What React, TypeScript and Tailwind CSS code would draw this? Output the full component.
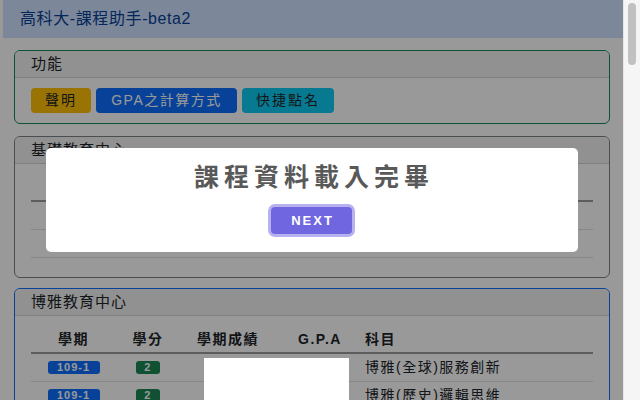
const cjk = "font-['Liberation_Sans','Noto_Sans_CJK_TC',sans-serif]";

type Row = { term: string; credit: string; grade: string; gpa: string; subject: string };

const generalRows: Row[] = [
  { term: '109-1', credit: '2', grade: '', gpa: '', subject: '博雅(全球)服務創新' },
  { term: '109-1', credit: '2', grade: '', gpa: '', subject: '博雅(歷史)邏輯思維' },
];

const headers = ['學期', '學分', '學期成績', 'G.P.A', '科目'];

function Card({ title, border, top, children }: { title: string; border: string; top: string; children: React.ReactNode }) {
  return (
    <div className={`${top} rounded-[6px] border ${border} bg-white overflow-hidden`}>
      <div className="h-[27px] flex items-center px-4 bg-[#f2f2f2] border-b border-[#d6d6d6] text-[15px] tracking-[1px] text-[#212529]">
        {title}
      </div>
      {children}
    </div>
  );
}

function CourseTable({ rows, showText }: { rows: Row[]; showText: boolean }) {
  const cols = 'grid grid-cols-[85px_64px_96px_88px_1fr]';
  return (
    <div className="px-4 pt-[10px] pb-[19px]">
      <div className={`${cols} h-[28px] items-center border-b-2 border-[#9c9c9c] text-[14px] font-bold tracking-[1.5px] text-[#212529]`}>
        {headers.map((h, i) => (
          <div key={h} className={i === 4 ? 'pl-[1px]' : 'text-center'}>
            {showText ? h : ''}
          </div>
        ))}
      </div>
      {rows.map((r, i) => (
        <div key={i} className={`${cols} h-[28px] items-center border-b border-[#dee2e6] text-[14px] tracking-[1.5px] text-[#212529]`}>
          <div className="flex justify-center">
            {showText && (
              <span className="w-[52px] h-[13px] flex items-center justify-center rounded-[3px] bg-[#0d6efd] text-white text-[11px] font-bold tracking-[1px]">
                {r.term}
              </span>
            )}
          </div>
          <div className="flex justify-center">
            {showText && (
              <span className="w-[24px] h-[13px] flex items-center justify-center rounded-[3px] bg-[#198754] text-white text-[11px] font-bold">
                {r.credit}
              </span>
            )}
          </div>
          <div className="text-center">{r.grade}</div>
          <div className="text-center">{r.gpa}</div>
          <div className="pl-[1px] whitespace-nowrap">{showText ? r.subject : ''}</div>
        </div>
      ))}
    </div>
  );
}

export default function App() {
  return (
    <div className={`w-[640px] h-[400px] flex ${cjk}`}>
      <div className="relative w-[623px] h-[400px] overflow-hidden bg-white">
        <div className="ml-[3px] h-[38px] flex items-center pl-[17px] bg-[#cfe2ff] text-[16px] tracking-[0.6px] text-[#084298]">
          高科大-課程助手-beta2
        </div>
        <div className="pl-[14px] pr-[13px]">
          <Card title="功能" border="border-[#198754]" top="mt-3">
            <div className="px-4 pt-[10px] pb-[10px] flex gap-[5px]">
              <button className="h-[25px] w-[60px] rounded-[4px] bg-[#ffc107] text-[14px] tracking-[2px] text-[#212529]">
                聲明
              </button>
              <button className="h-[25px] w-[141px] rounded-[4px] bg-[#0d6efd] text-[14px] tracking-[1.5px] text-white">
                GPA之計算方式
              </button>
              <button className="h-[25px] w-[92px] rounded-[4px] bg-[#0dcaf0] text-[14px] tracking-[2px] text-[#212529]">
                快捷點名
              </button>
            </div>
          </Card>
          <Card title="基礎教育中心" border="border-[#7b8288]" top="mt-3">
            <CourseTable rows={generalRows} showText={false} />
          </Card>
          <Card title="博雅教育中心" border="border-[#0d6efd]" top="mt-[10px]">
            <CourseTable rows={generalRows} showText />
          </Card>
        </div>

        <div className="absolute inset-0 bg-black/40 flex items-center justify-center">
          <div className="w-[532px] h-[104px] rounded-[5px] bg-white flex flex-col items-center pt-[14px]">
            <div className="h-[30px] leading-[30px] text-[25px] font-bold tracking-[5px] text-[#595959] pl-[5px]">
              課程資料載入完畢
            </div>
            <button className="mt-[15px] w-[81px] h-[27px] rounded-[4px] bg-[#7066e0] shadow-[0_0_0_3px_rgba(112,102,224,0.5)] text-white text-[13px] font-bold tracking-[2px] pl-[2px]">
              NEXT
            </button>
          </div>
        </div>

        <div className="absolute left-[204px] top-[358px] w-[145px] h-[42px] bg-white" />
      </div>
      <div className="w-[17px] h-[400px] bg-[#f5f5f5] border-l border-[#e6e6e6] pt-[3px] flex justify-center">
        <div className="w-[8px] h-[62px] rounded-full bg-[#c1c1c1]" />
      </div>
    </div>
  );
}
